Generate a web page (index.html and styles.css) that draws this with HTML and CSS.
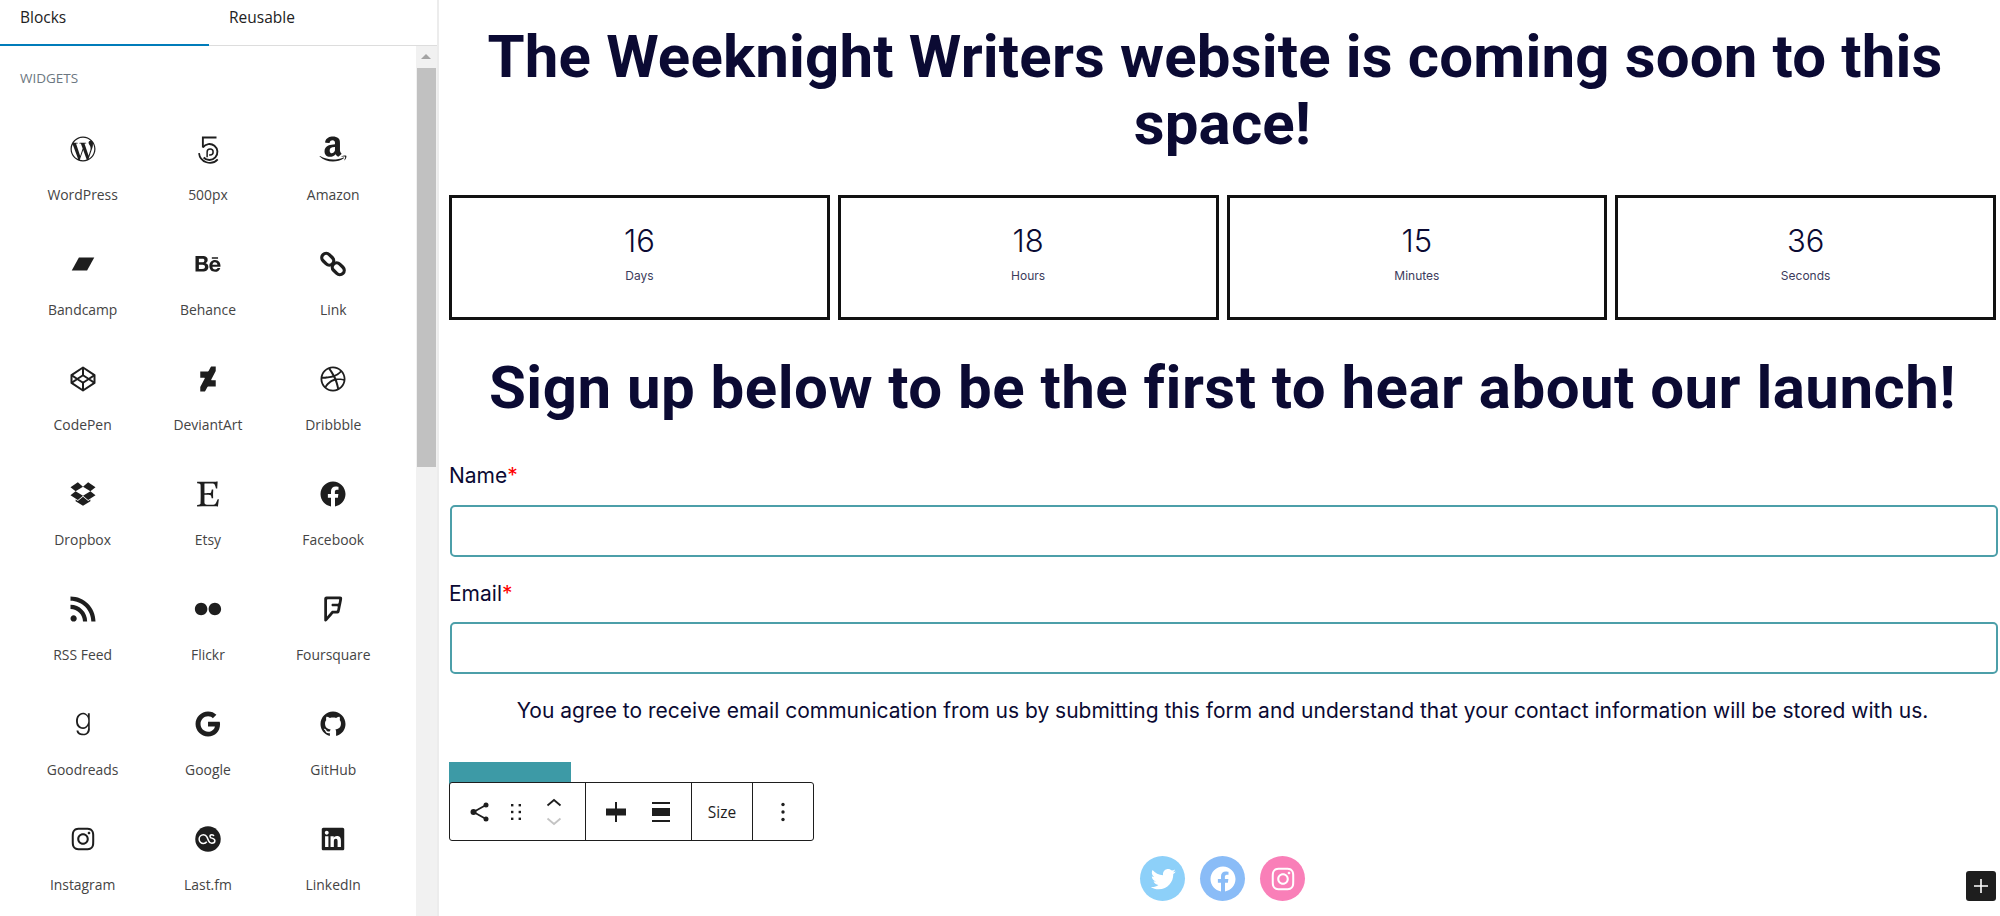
FILE: index.html
```html
<!DOCTYPE html>
<html lang="en">
<head>
  <meta charset="UTF-8" />
  <title>Weeknight Writers</title>
  <link rel="stylesheet" href="styles.css">
</head>
<body>

<aside class="sidebar">
  <div class="tabs">
    <div class="tab active">Blocks</div>
    <div class="tab">Reusable</div>
  </div>
  <div class="panel">
    <div class="block-list">
      <div class="category">WIDGETS</div>
      <div class="block-grid">
        <div class="block-item">
          <svg viewBox="0 0 24 24"><path d="M12.158,12.786L9.46,20.625c0.806,0.237,1.657,0.366,2.54,0.366c1.047,0,2.051-0.181,2.986-0.51 c-0.024-0.038-0.046-0.079-0.065-0.124L12.158,12.786z M3.009,12c0,3.559,2.068,6.634,5.067,8.092L3.788,8.341 C3.289,9.459,3.009,10.696,3.009,12z M18.069,11.546c0-1.112-0.399-1.881-0.741-2.48c-0.456-0.741-0.883-1.368-0.883-2.109 c0-0.826,0.627-1.596,1.51-1.596c0.04,0,0.078,0.005,0.116,0.007C16.472,3.904,14.34,3.009,12,3.009 c-3.141,0-5.904,1.612-7.512,4.052c0.211,0.007,0.41,0.011,0.579,0.011c0.94,0,2.396-0.114,2.396-0.114 C7.947,6.93,8.004,7.642,7.52,7.699c0,0-0.487,0.057-1.029,0.085l3.274,9.739l1.968-5.901l-1.401-3.838 C9.848,7.756,9.389,7.699,9.389,7.699C8.904,7.67,8.961,6.93,9.446,6.958c0,0,1.484,0.114,2.368,0.114 c0.94,0,2.397-0.114,2.397-0.114c0.485-0.028,0.542,0.684,0.057,0.741c0,0-0.488,0.057-1.029,0.085l3.249,9.665l0.897-2.996 C17.841,13.284,18.069,12.316,18.069,11.546z M19.889,7.686c0.039,0.286,0.06,0.593,0.06,0.924c0,0.912-0.171,1.938-0.684,3.22 l-2.746,7.94c2.673-1.558,4.47-4.454,4.47-7.771C20.991,10.436,20.591,8.967,19.889,7.686z M12,22C6.486,22,2,17.514,2,12 C2,6.486,6.486,2,12,2c5.514,0,10,4.486,10,10C22,17.514,17.514,22,12,22z"/></svg>
          <span>WordPress</span>
        </div>
        <div class="block-item">
          <svg viewBox="0 0 24 24"><g fill="none" stroke="currentColor"><path stroke-width="1.500" d="M18.800 2.800H7.900v7.900"/><path stroke-width="1.500" d="M7.900 10.700A6.400 6.400 0 1 1 8.500 18.800"/><path stroke-width="1.200" d="M11.300 18.500V14.300a2.400 2.400 0 1 1 2.400 2.400h-.8"/><path stroke-width="1.400" d="M4.800 15.300A8.700 8.700 0 0 0 19.800 20.300"/></g></svg>
          <span>500px</span>
        </div>
        <div class="block-item">
          <svg viewBox="0 0 24 24"><path d="M13.582,8.182C11.934,8.367,9.78,8.49,8.238,9.166c-1.781,0.769-3.03,2.337-3.03,4.644 c0,2.953,1.86,4.429,4.253,4.429c2.02,0,3.125-0.477,4.685-2.065c0.516,0.747,0.685,1.109,1.629,1.894 c0.212,0.114,0.483,0.103,0.672-0.066l0.006,0.006c0.567-0.505,1.599-1.401,2.18-1.888c0.231-0.188,0.19-0.496,0.009-0.754 c-0.52-0.718-1.072-1.303-1.072-2.634V8.305c0-1.876,0.133-3.599-1.249-4.891C15.23,2.369,13.422,2,12.04,2 C9.336,2,6.318,3.01,5.686,6.351C5.618,6.706,5.877,6.893,6.109,6.945l2.754,0.298C9.121,7.23,9.308,6.977,9.357,6.72 c0.236-1.151,1.2-1.706,2.284-1.706c0.584,0,1.249,0.215,1.595,0.738c0.398,0.584,0.346,1.384,0.346,2.061V8.182z M13.049,14.088 c-0.451,0.8-1.169,1.291-1.967,1.291c-1.09,0-1.728-0.83-1.728-2.061c0-2.42,2.171-2.86,4.227-2.86v0.615 C13.582,13.18,13.608,14.112,13.049,14.088z M20.683,19.339C18.329,21.076,14.917,22,11.979,22c-4.118,0-7.826-1.522-10.632-4.057 c-0.22-0.199-0.024-0.471,0.241-0.317c3.027,1.762,6.771,2.823,10.639,2.823c2.608,0,5.476-0.541,8.115-1.66 C20.739,18.62,21.072,19.051,20.683,19.339z M21.336,21.043c-0.194,0.163-0.379,0.076-0.293-0.139 c0.284-0.71,0.92-2.298,0.619-2.684c-0.301-0.386-1.99-0.183-2.749-0.092c-0.23,0.027-0.266-0.173-0.059-0.319 c1.348-0.946,3.555-0.673,3.811-0.356C22.925,17.773,22.599,19.986,21.336,21.043z"/></svg>
          <span>Amazon</span>
        </div>
        <div class="block-item">
          <svg viewBox="0 0 24 24"><path d="M15.27 17.289 3 17.289 8.73 6.711 21 6.711 15.27 17.289"/></svg>
          <span>Bandcamp</span>
        </div>
        <div class="block-item">
          <svg viewBox="0 0 24 24"><path d="M7.799,5.698c0.589,0,1.12,0.051,1.606,0.156c0.482,0.102,0.894,0.273,1.241,0.507c0.344,0.235,0.612,0.546,0.804,0.938 c0.188,0.387,0.281,0.871,0.281,1.443c0,0.619-0.141,1.137-0.421,1.551c-0.284,0.413-0.7,0.751-1.255,1.014 c0.756,0.218,1.317,0.601,1.689,1.146c0.374,0.549,0.557,1.205,0.557,1.975c0,0.623-0.12,1.161-0.359,1.612 c-0.241,0.457-0.569,0.828-0.973,1.114c-0.408,0.288-0.876,0.5-1.399,0.637C9.052,17.931,8.514,18,7.963,18H2V5.698H7.799 M7.449,10.668c0.481,0,0.878-0.114,1.192-0.345c0.311-0.228,0.463-0.603,0.463-1.119c0-0.286-0.051-0.523-0.152-0.707 C8.848,8.315,8.711,8.171,8.536,8.07C8.362,7.966,8.166,7.894,7.94,7.854c-0.224-0.044-0.457-0.06-0.697-0.06H4.709v2.874H7.449z M7.6,15.905c0.267,0,0.521-0.024,0.759-0.077c0.243-0.053,0.457-0.137,0.637-0.261c0.182-0.12,0.332-0.283,0.441-0.491 C9.547,14.87,9.6,14.602,9.6,14.278c0-0.633-0.18-1.084-0.533-1.357c-0.356-0.27-0.83-0.404-1.413-0.404H4.709v3.388L7.6,15.905z M16.162,15.864c0.367,0.358,0.897,0.538,1.583,0.538c0.493,0,0.92-0.125,1.277-0.374c0.354-0.248,0.571-0.514,0.654-0.79h2.155 c-0.347,1.072-0.872,1.838-1.589,2.299C19.534,18,18.67,18.23,17.662,18.23c-0.701,0-1.332-0.113-1.899-0.337 c-0.567-0.227-1.041-0.544-1.439-0.958c-0.389-0.415-0.689-0.907-0.904-1.484c-0.213-0.574-0.32-1.21-0.32-1.899 c0-0.666,0.11-1.288,0.329-1.863c0.222-0.577,0.529-1.075,0.933-1.492c0.406-0.42,0.885-0.751,1.444-0.994 c0.558-0.241,1.175-0.363,1.857-0.363c0.754,0,1.414,0.145,1.98,0.44c0.563,0.291,1.026,0.686,1.389,1.181 c0.363,0.493,0.622,1.057,0.783,1.69c0.16,0.632,0.217,1.292,0.171,1.983h-6.428C15.557,14.84,15.795,15.506,16.162,15.864 M18.973,11.184c-0.291-0.321-0.783-0.496-1.384-0.496c-0.39,0-0.714,0.066-0.973,0.2c-0.254,0.132-0.461,0.297-0.621,0.491 c-0.157,0.197-0.265,0.405-0.328,0.628c-0.063,0.217-0.101,0.413-0.111,0.587h3.98C19.478,11.969,19.265,11.509,18.973,11.184z M15.057,7.738h4.985V6.524h-4.985L15.057,7.738z"/></svg>
          <span>Behance</span>
        </div>
        <div class="block-item">
          <svg viewBox="0 0 24 24"><g fill="none" stroke="currentColor" stroke-width="2.600"><rect x="2.500" y="4.700" width="10.600" height="7" rx="3.500" transform="rotate(45 7.800 8.200)"/><rect x="10.900" y="12.300" width="10.600" height="7" rx="3.500" transform="rotate(45 16.200 15.800)"/></g></svg>
          <span>Link</span>
        </div>
        <div class="block-item">
          <svg viewBox="0 0 24 24"><g fill="none" stroke="currentColor" stroke-width="1.600" stroke-linejoin="round"><path d="M12 2.800 21.200 8.900v6.200L12 21.200 2.800 15.100V8.900z"/><path d="M12 9 16.600 12 12 15 7.400 12z"/><path d="M12 2.800V9M12 15v6.200M2.800 8.900 7.400 12 2.800 15.100M21.200 8.900 16.600 12l4.600 3.100"/></g></svg>
          <span>CodePen</span>
        </div>
        <div class="block-item">
          <svg viewBox="0 0 24 24"><path d="M 18.19 5.636 18.19 2 18.188 2 14.553 2 14.19 2.366 12.474 5.636 11.935 6 5.81 6 5.81 10.994 9.177 10.994 9.477 11.357 5.81 18.363 5.81 22 5.811 22 9.447 22 9.81 21.634 11.526 18.364 12.065 18 18.19 18 18.19 13.006 14.823 13.006 14.523 12.641 z"/></svg>
          <span>DeviantArt</span>
        </div>
        <div class="block-item">
          <svg viewBox="0 0 24 24"><path d="M12,22C6.486,22,2,17.514,2,12S6.486,2,12,2c5.514,0,10,4.486,10,10S17.514,22,12,22z M20.434,13.369 c-0.292-0.092-2.644-0.794-5.32-0.365c1.117,3.07,1.572,5.57,1.659,6.09C18.689,17.798,20.053,15.745,20.434,13.369z M15.336,19.876c-0.127-0.749-0.623-3.361-1.822-6.477c-0.019,0.006-0.038,0.013-0.056,0.019c-4.818,1.679-6.547,5.02-6.701,5.334 c1.448,1.129,3.268,1.803,5.243,1.803C13.183,20.555,14.311,20.313,15.336,19.876z M5.654,17.724 c0.193-0.331,2.538-4.213,6.943-5.637c0.111-0.036,0.224-0.07,0.337-0.102c-0.214-0.485-0.448-0.971-0.692-1.45 c-4.266,1.277-8.405,1.223-8.778,1.216c-0.003,0.087-0.004,0.174-0.004,0.261C3.458,14.207,4.29,16.21,5.654,17.724z M3.639,10.264 c0.382,0.005,3.901,0.02,7.897-1.041c-1.415-2.516-2.942-4.631-3.167-4.94C5.979,5.41,4.193,7.613,3.639,10.264z M9.998,3.709 c0.236,0.316,1.787,2.429,3.187,5c3.037-1.138,4.323-2.867,4.477-3.085C16.154,4.286,14.17,3.471,12,3.471 C11.311,3.471,10.641,3.554,9.998,3.709z M18.612,6.612C18.432,6.855,17,8.69,13.842,9.979c0.199,0.407,0.389,0.821,0.567,1.237 c0.063,0.148,0.124,0.295,0.184,0.441c2.842-0.357,5.666,0.215,5.948,0.275C20.522,9.916,19.801,8.065,18.612,6.612z"/></svg>
          <span>Dribbble</span>
        </div>
        <div class="block-item">
          <svg viewBox="0 0 24 24"><path d="M12,6.134L6.069,9.797L2,6.54l5.883-3.843L12,6.134z M2,13.054l5.883,3.843L12,13.459L6.069,9.797L2,13.054z M12,13.459 l4.116,3.439L22,13.054l-4.069-3.257L12,13.459z M22,6.54l-5.884-3.843L12,6.134l5.931,3.663L22,6.54z M12.011,14.2l-4.129,3.426 l-1.767-1.153v1.291l5.896,3.539l5.897-3.539v-1.291l-1.769,1.153L12.011,14.2z"/></svg>
          <span>Dropbox</span>
        </div>
        <div class="block-item">
          <svg viewBox="0 0 24 24"><path d="M9.16033,4.038c0-.27174.02717-.43478.48913-.43478h6.22283c1.087,0,1.68478.92391,2.11957,2.663l.35326,1.38587h1.05978C19.59511,3.712,19.75815,2,19.75815,2s-2.663.29891-4.23913.29891h-7.962L3.29076,2.163v1.1413L4.731,3.57609c1.00543.19022,1.25.40761,1.33152,1.33152,0,0,.08152,2.71739.08152,7.20109s-.08152,7.17391-.08152,7.17391c0,.81522-.32609,1.11413-1.33152,1.30435l-1.44022.27174V22l4.2663-.13587h7.11957c1.60326,0,5.32609.13587,5.32609.13587.08152-.97826.625-5.40761.70652-5.89674H19.7038L18.644,18.52174c-.84239,1.90217-2.06522,2.038-3.42391,2.038H11.1712c-1.3587,0-2.01087-.54348-2.01087-1.712V12.65217s3.0163,0,3.99457.08152c.76087.05435,1.22283.27174,1.46739,1.33152l.32609,1.413h1.16848l-.08152-3.55978.163-3.587H15.02989l-.38043,1.57609c-.24457,1.03261-.40761,1.22283-1.46739,1.33152-1.38587.13587-4.02174.1087-4.02174.1087Z"/></svg>
          <span>Etsy</span>
        </div>
        <div class="block-item">
          <svg viewBox="0 0 24 24"><path d="M12 2C6.5 2 2 6.5 2 12c0 5 3.7 9.1 8.4 9.9v-7H7.9V12h2.5V9.8c0-2.5 1.5-3.9 3.8-3.9 1.1 0 2.2.2 2.2.2v2.5h-1.3c-1.2 0-1.6.8-1.6 1.6V12h2.8l-.4 2.9h-2.3v7C18.3 21.1 22 17 22 12c0-5.5-4.5-10-10-10z"/></svg>
          <span>Facebook</span>
        </div>
        <div class="block-item">
          <svg viewBox="0 0 24 24"><path d="M2,8.667V12c5.515,0,10,4.485,10,10h3.333C15.333,14.637,9.363,8.667,2,8.667z M2,2v3.333 c9.19,0,16.667,7.477,16.667,16.667H22C22,10.955,13.045,2,2,2z M4.5,17C3.118,17,2,18.12,2,19.5S3.118,22,4.5,22S7,20.88,7,19.5 S5.882,17,4.5,17z"/></svg>
          <span>RSS Feed</span>
        </div>
        <div class="block-item">
          <svg viewBox="0 0 24 24"><path d="M6.5,7c-2.75,0-5,2.25-5,5s2.25,5,5,5s5-2.25,5-5S9.25,7,6.5,7z M17.5,7c-2.75,0-5,2.25-5,5s2.25,5,5,5s5-2.25,5-5 S20.25,7,17.5,7z"/></svg>
          <span>Flickr</span>
        </div>
        <div class="block-item">
          <svg viewBox="0 0 24 24"><path d="M17.573,2c0,0-9.197,0-10.668,0S5,3.107,5,3.805s0,16.948,0,16.948c0,0.785,0.422,1.077,0.66,1.172 c0.238,0.097,0.892,0.177,1.285-0.275c0,0,5.035-5.843,5.122-5.93c0.132-0.132,0.132-0.132,0.262-0.132h3.26 c1.368,0,1.588-0.977,1.732-1.552c0.078-0.318,0.692-3.428,1.225-6.122l0.675-3.368C19.56,2.893,19.14,2,17.573,2z M16.495,7.22 c-0.053,0.252-0.372,0.518-0.665,0.518c-0.293,0-4.157,0-4.157,0c-0.467,0-0.802,0.318-0.802,0.787v0.508 c0,0.467,0.337,0.798,0.805,0.798c0,0,3.197,0,3.528,0s0.655,0.362,0.583,0.715c-0.072,0.353-0.407,2.102-0.448,2.295 c-0.04,0.193-0.262,0.523-0.655,0.523c-0.33,0-2.88,0-2.88,0c-0.523,0-0.683,0.068-1.033,0.503 c-0.35,0.437-3.505,4.223-3.505,4.223c-0.032,0.035-0.063,0.027-0.063-0.015V4.852c0-0.3,0.26-0.652,0.648-0.652 c0,0,8.228,0,8.562,0c0.315,0,0.61,0.297,0.528,0.683L16.495,7.22z"/></svg>
          <span>Foursquare</span>
        </div>
        <div class="block-item">
          <svg viewBox="0 0 24 24"><path d="M17.3,17.5c-0.2,0.8-0.5,1.4-1,1.9c-0.4,0.5-1,0.9-1.7,1.2C13.9,20.9,13.1,21,12,21c-0.6,0-1.3-0.1-1.9-0.2 c-0.6-0.1-1.1-0.4-1.6-0.7c-0.5-0.3-0.9-0.7-1.2-1.2c-0.3-0.5-0.5-1.1-0.5-1.7h1.5c0.1,0.5,0.2,0.9,0.5,1.2 c0.2,0.3,0.5,0.6,0.9,0.8c0.3,0.2,0.7,0.3,1.1,0.4c0.4,0.1,0.8,0.1,1.2,0.1c1.4,0,2.5-0.4,3.1-1.2c0.6-0.8,1-2,1-3.5v-1.7h0 c-0.4,0.8-0.9,1.4-1.6,1.9c-0.7,0.5-1.5,0.7-2.4,0.7c-1,0-1.9-0.2-2.6-0.5C8.7,15,8.1,14.5,7.7,14c-0.5-0.6-0.8-1.3-1-2.1 c-0.2-0.8-0.3-1.6-0.3-2.5c0-0.9,0.1-1.7,0.4-2.5c0.3-0.8,0.6-1.5,1.1-2c0.5-0.6,1.1-1,1.8-1.4C10.3,3.2,11.1,3,12,3 c0.5,0,0.9,0.1,1.3,0.2c0.4,0.1,0.8,0.3,1.1,0.5c0.3,0.2,0.6,0.5,0.9,0.8c0.3,0.3,0.5,0.6,0.6,1h0V3.4h1.5V15 C17.6,15.9,17.5,16.7,17.3,17.5z M13.8,14.1c0.5-0.3,0.9-0.7,1.3-1.1c0.3-0.5,0.6-1,0.8-1.6c0.2-0.6,0.3-1.2,0.3-1.9 c0-0.6-0.1-1.2-0.2-1.9c-0.1-0.6-0.4-1.2-0.7-1.7c-0.3-0.5-0.7-0.9-1.3-1.2c-0.5-0.3-1.1-0.5-1.9-0.5s-1.4,0.2-1.9,0.5 c-0.5,0.3-1,0.7-1.3,1.2C8.5,6.4,8.3,7,8.1,7.6C8,8.2,7.9,8.9,7.9,9.5c0,0.6,0.1,1.3,0.2,1.9C8.3,12,8.6,12.5,8.9,13 c0.3,0.5,0.8,0.8,1.3,1.1c0.5,0.3,1.1,0.4,1.9,0.4C12.7,14.5,13.3,14.4,13.8,14.1z"/></svg>
          <span>Goodreads</span>
        </div>
        <div class="block-item">
          <svg viewBox="0 0 24 24"><path d="M12.02,10.18v3.72v0.01h5.51c-0.26,1.57-1.67,4.22-5.5,4.22c-3.31,0-6.01-2.75-6.01-6.12s2.7-6.12,6.01-6.12 c1.87,0,3.13,0.8,3.85,1.48l2.84-2.76C16.99,2.99,14.73,2,12.03,2c-5.52,0-10,4.48-10,10s4.48,10,10,10c5.77,0,9.6-4.06,9.6-9.77 c0-0.83-0.11-1.42-0.25-2.05H12.02z"/></svg>
          <span>Google</span>
        </div>
        <div class="block-item">
          <svg viewBox="0 0 24 24"><path d="M12,2C6.477,2,2,6.477,2,12c0,4.419,2.865,8.166,6.839,9.489c0.5,0.09,0.682-0.218,0.682-0.484 c0-0.236-0.009-0.866-0.014-1.699c-2.782,0.602-3.369-1.34-3.369-1.34c-0.455-1.157-1.11-1.465-1.11-1.465 c-0.909-0.62,0.069-0.608,0.069-0.608c1.004,0.071,1.532,1.03,1.532,1.03c0.891,1.529,2.341,1.089,2.91,0.833 c0.091-0.647,0.349-1.086,0.635-1.337c-2.22-0.251-4.555-1.111-4.555-4.943c0-1.091,0.39-1.984,1.03-2.682 C6.546,8.54,6.202,7.524,6.746,6.148c0,0,0.84-0.269,2.75,1.025C10.295,6.95,11.15,6.84,12,6.836 c0.85,0.004,1.705,0.114,2.504,0.336c1.909-1.294,2.748-1.025,2.748-1.025c0.546,1.376,0.202,2.394,0.1,2.646 c0.64,0.699,1.026,1.591,1.026,2.682c0,3.841-2.337,4.687-4.565,4.935c0.359,0.307,0.679,0.917,0.679,1.852 c0,1.335-0.012,2.415-0.012,2.741c0,0.269,0.18,0.579,0.688,0.481C19.138,20.161,22,16.416,22,12C22,6.477,17.523,2,12,2z"/></svg>
          <span>GitHub</span>
        </div>
        <div class="block-item">
          <svg viewBox="0 0 24 24"><path d="M12,4.622c2.403,0,2.688,0.009,3.637,0.052c0.877,0.04,1.354,0.187,1.671,0.31c0.42,0.163,0.72,0.358,1.035,0.673 c0.315,0.315,0.51,0.615,0.673,1.035c0.123,0.317,0.27,0.794,0.31,1.671c0.043,0.949,0.052,1.234,0.052,3.637 s-0.009,2.688-0.052,3.637c-0.04,0.877-0.187,1.354-0.31,1.671c-0.163,0.42-0.358,0.72-0.673,1.035 c-0.315,0.315-0.615,0.51-1.035,0.673c-0.317,0.123-0.794,0.27-1.671,0.31c-0.949,0.043-1.233,0.052-3.637,0.052 s-2.688-0.009-3.637-0.052c-0.877-0.04-1.354-0.187-1.671-0.31c-0.42-0.163-0.72-0.358-1.035-0.673 c-0.315-0.315-0.51-0.615-0.673-1.035c-0.123-0.317-0.27-0.794-0.31-1.671C4.631,14.688,4.622,14.403,4.622,12 s0.009-2.688,0.052-3.637c0.04-0.877,0.187-1.354,0.31-1.671c0.163-0.42,0.358-0.72,0.673-1.035 c0.315-0.315,0.615-0.51,1.035-0.673c0.317-0.123,0.794-0.27,1.671-0.31C9.312,4.631,9.597,4.622,12,4.622 M12,3 C9.556,3,9.249,3.01,8.289,3.054C7.331,3.098,6.677,3.25,6.105,3.472C5.513,3.702,5.011,4.01,4.511,4.511 c-0.5,0.5-0.808,1.002-1.038,1.594C3.25,6.677,3.098,7.331,3.054,8.289C3.01,9.249,3,9.556,3,12c0,2.444,0.01,2.751,0.054,3.711 c0.044,0.958,0.196,1.612,0.418,2.185c0.23,0.592,0.538,1.094,1.038,1.594c0.5,0.5,1.002,0.808,1.594,1.038 c0.572,0.222,1.227,0.375,2.185,0.418C9.249,20.99,9.556,21,12,21s2.751-0.01,3.711-0.054c0.958-0.044,1.612-0.196,2.185-0.418 c0.592-0.23,1.094-0.538,1.594-1.038c0.5-0.5,0.808-1.002,1.038-1.594c0.222-0.572,0.375-1.227,0.418-2.185 C20.99,14.751,21,14.444,21,12s-0.01-2.751-0.054-3.711c-0.044-0.958-0.196-1.612-0.418-2.185c-0.23-0.592-0.538-1.094-1.038-1.594 c-0.5-0.5-1.002-0.808-1.594-1.038c-0.572-0.222-1.227-0.375-2.185-0.418C14.751,3.01,14.444,3,12,3L12,3z M12,7.378 c-2.552,0-4.622,2.069-4.622,4.622S9.448,16.622,12,16.622s4.622-2.069,4.622-4.622S14.552,7.378,12,7.378z M12,15 c-1.657,0-3-1.343-3-3s1.343-3,3-3s3,1.343,3,3S13.657,15,12,15z M16.804,6.116c-0.596,0-1.08,0.484-1.08,1.08 s0.484,1.08,1.08,1.08c0.596,0,1.08-0.484,1.08-1.08S17.401,6.116,16.804,6.116z"/></svg>
          <span>Instagram</span>
        </div>
        <div class="block-item">
          <svg viewBox="0 0 24 24"><circle cx="12" cy="12" r="10.200"/><path fill="none" stroke="#fff" stroke-width="1.200" d="M11 14.200c-.7 1-1.600 1.400-2.600 1.400A3.500 3.500 0 0 1 4.900 12a3.500 3.500 0 0 1 3.500-3.500c1.300 0 2.200.7 2.800 2l1.300 3c.5 1.200 1.100 1.900 2.500 1.900 1.500 0 2.500-.8 2.500-2 0-1.100-.7-1.600-1.900-1.900-1.500-.4-2-.8-2-1.600 0-.8.7-1.300 1.500-1.300s1.400.4 1.600 1.100"/></svg>
          <span>Last.fm</span>
        </div>
        <div class="block-item">
          <svg viewBox="0 0 24 24"><path d="M19.7,3H4.3C3.582,3,3,3.582,3,4.3v15.4C3,20.418,3.582,21,4.3,21h15.4c0.718,0,1.3-0.582,1.3-1.3V4.3 C21,3.582,20.418,3,19.7,3z M8.339,18.338H5.667v-8.59h2.672V18.338z M7.004,8.574c-0.857,0-1.549-0.694-1.549-1.548 c0-0.855,0.691-1.548,1.549-1.548c0.854,0,1.547,0.694,1.547,1.548C8.551,7.881,7.858,8.574,7.004,8.574z M18.339,18.338h-2.669 v-4.177c0-0.996-0.017-2.278-1.387-2.278c-1.389,0-1.601,1.086-1.601,2.206v4.249h-2.667v-8.59h2.559v1.174h0.037 c0.356-0.675,1.227-1.387,2.526-1.387c2.703,0,3.203,1.779,3.203,4.092V18.338z"/></svg>
          <span>LinkedIn</span>
        </div>
      </div>
    </div>
    <div class="scrollbar">
      <div class="scroll-arrow"></div>
      <div class="scroll-thumb"></div>
    </div>
  </div>
</aside>

<main class="canvas">
  <h1 class="title">The Weeknight Writers website is coming soon to this&nbsp; space!</h1>

  <div class="countdown">
    <div class="count-box"><div class="count-num">16</div><div class="count-label">Days</div></div>
    <div class="count-box"><div class="count-num">18</div><div class="count-label">Hours</div></div>
    <div class="count-box"><div class="count-num">15</div><div class="count-label">Minutes</div></div>
    <div class="count-box"><div class="count-num">36</div><div class="count-label">Seconds</div></div>
  </div>

  <h2 class="title signup">Sign up below to be the first to hear about our launch!</h2>

  <form class="signup-form">
    <label class="field-label">Name<span class="req">*</span></label>
    <div class="field-input"></div>
    <label class="field-label">Email<span class="req">*</span></label>
    <div class="field-input"></div>
    <p class="consent">You agree to receive email communication from us by submitting this form and understand that your contact information will be stored with us.</p>
    <div class="submit-btn"></div>
  </form>

  <div class="socials">
    <div class="social tw">
      <svg viewBox="0 0 24 24"><path d="M22.23,5.924c-0.736,0.326-1.527,0.547-2.357,0.646c0.847-0.508,1.498-1.312,1.804-2.27 c-0.793,0.47-1.671,0.812-2.606,0.996C18.324,4.498,17.257,4,16.077,4c-2.266,0-4.103,1.837-4.103,4.103 c0,0.322,0.036,0.635,0.106,0.935C8.67,8.867,5.647,7.234,3.623,4.751C3.27,5.357,3.067,6.062,3.067,6.814 c0,1.424,0.724,2.679,1.825,3.415c-0.673-0.021-1.305-0.206-1.859-0.513c0,0.017,0,0.034,0,0.052c0,1.988,1.414,3.647,3.292,4.023 c-0.344,0.094-0.707,0.144-1.081,0.144c-0.264,0-0.521-0.026-0.772-0.074c0.522,1.63,2.038,2.816,3.833,2.85 c-1.404,1.1-3.174,1.756-5.096,1.756c-0.331,0-0.658-0.019-0.979-0.057c1.816,1.164,3.973,1.843,6.29,1.843 c7.547,0,11.675-6.252,11.675-11.675c0-0.178-0.004-0.355-0.012-0.531C20.985,7.47,21.68,6.747,22.23,5.924z"/></svg>
    </div>
    <div class="social fb">
      <svg viewBox="0 0 24 24"><path d="M12 2C6.500 2 2 6.500 2 12c0 5 3.700 9.100 8.400 9.900v-7H7.900V12h2.500V9.800c0-2.500 1.500-3.900 3.800-3.900 1.100 0 2.200.2 2.200.2v2.500h-1.300c-1.200 0-1.600.8-1.600 1.600V12h2.800l-.4 2.900h-2.300v7C18.300 21.100 22 17 22 12c0-5.500-4.500-10-10-10z"/></svg>
    </div>
    <div class="social ig">
      <svg viewBox="0 0 24 24"><path d="M12,4.622c2.403,0,2.688,0.009,3.637,0.052c0.877,0.04,1.354,0.187,1.671,0.31c0.42,0.163,0.72,0.358,1.035,0.673 c0.315,0.315,0.51,0.615,0.673,1.035c0.123,0.317,0.27,0.794,0.31,1.671c0.043,0.949,0.052,1.234,0.052,3.637 s-0.009,2.688-0.052,3.637c-0.04,0.877-0.187,1.354-0.31,1.671c-0.163,0.42-0.358,0.72-0.673,1.035 c-0.315,0.315-0.615,0.51-1.035,0.673c-0.317,0.123-0.794,0.27-1.671,0.31c-0.949,0.043-1.233,0.052-3.637,0.052 s-2.688-0.009-3.637-0.052c-0.877-0.04-1.354-0.187-1.671-0.31c-0.42-0.163-0.72-0.358-1.035-0.673 c-0.315-0.315-0.51-0.615-0.673-1.035c-0.123-0.317-0.27-0.794-0.31-1.671C4.631,14.688,4.622,14.403,4.622,12 s0.009-2.688,0.052-3.637c0.04-0.877,0.187-1.354,0.31-1.671c0.163-0.42,0.358-0.72,0.673-1.035 c0.315-0.315,0.615-0.51,1.035-0.673c0.317-0.123,0.794-0.27,1.671-0.31C9.312,4.631,9.597,4.622,12,4.622 M12,3 C9.556,3,9.249,3.01,8.289,3.054C7.331,3.098,6.677,3.25,6.105,3.472C5.513,3.702,5.011,4.01,4.511,4.511 c-0.5,0.5-0.808,1.002-1.038,1.594C3.25,6.677,3.098,7.331,3.054,8.289C3.01,9.249,3,9.556,3,12c0,2.444,0.01,2.751,0.054,3.711 c0.044,0.958,0.196,1.612,0.418,2.185c0.23,0.592,0.538,1.094,1.038,1.594c0.5,0.5,1.002,0.808,1.594,1.038 c0.572,0.222,1.227,0.375,2.185,0.418C9.249,20.99,9.556,21,12,21s2.751-0.01,3.711-0.054c0.958-0.044,1.612-0.196,2.185-0.418 c0.592-0.23,1.094-0.538,1.594-1.038c0.5-0.5,0.808-1.002,1.038-1.594c0.222-0.572,0.375-1.227,0.418-2.185 C20.99,14.751,21,14.444,21,12s-0.01-2.751-0.054-3.711c-0.044-0.958-0.196-1.612-0.418-2.185c-0.23-0.592-0.538-1.094-1.038-1.594 c-0.5-0.5-1.002-0.808-1.594-1.038c-0.572-0.222-1.227-0.375-2.185-0.418C14.751,3.01,14.444,3,12,3L12,3z M12,7.378 c-2.552,0-4.622,2.069-4.622,4.622S9.448,16.622,12,16.622s4.622-2.069,4.622-4.622S14.552,7.378,12,7.378z M12,15 c-1.657,0-3-1.343-3-3s1.343-3,3-3s3,1.343,3,3S13.657,15,12,15z M16.804,6.116c-0.596,0-1.08,0.484-1.08,1.08 s0.484,1.08,1.08,1.08c0.596,0,1.08-0.484,1.08-1.08S17.401,6.116,16.804,6.116z"/></svg>
    </div>
  </div>

  <!-- floating block toolbar -->
  <div class="toolbar">
    <div class="tool-group first">
      <svg class="tool-share" viewBox="0 0 20 20"><path fill="none" stroke="currentColor" stroke-width="1.800" d="M16 3 3.500 10 16 17"/><circle cx="16" cy="3" r="2.500"/><circle cx="3.500" cy="10" r="3"/><circle cx="16" cy="17" r="2.500"/></svg>
      <svg class="tool-drag" viewBox="0 0 12 18"><rect x="1" y="1" width="2.400" height="2.400"/><rect x="8.600" y="1" width="2.400" height="2.400"/><rect x="1" y="7.800" width="2.400" height="2.400"/><rect x="8.600" y="7.800" width="2.400" height="2.400"/><rect x="1" y="14.600" width="2.400" height="2.400"/><rect x="8.600" y="14.600" width="2.400" height="2.400"/></svg>
      <div class="movers">
        <svg viewBox="0 0 16 9"><path fill="none" stroke="currentColor" stroke-width="1.800" d="M1.500 7.500 8 2l6.500 5.500"/></svg>
        <svg class="off" viewBox="0 0 16 9"><path fill="none" stroke="currentColor" stroke-width="1.800" d="M1.500 1.500 8 7l6.500-5.500"/></svg>
      </div>
    </div>
    <div class="tool-group second">
      <svg class="tool-just" viewBox="0 0 22 22"><rect x="1" y="7.500" width="20" height="7"/><rect x="10" y="1" width="2" height="20"/></svg>
      <svg class="tool-just" viewBox="0 0 22 22"><rect x="2" y="1" width="18" height="2"/><rect x="2" y="7" width="18" height="8"/><rect x="2" y="19" width="18" height="2"/></svg>
    </div>
    <div class="tool-group size">Size</div>
    <div class="tool-group more">
      <svg viewBox="0 0 4 20"><circle cx="2" cy="2.500" r="1.700"/><circle cx="2" cy="10" r="1.700"/><circle cx="2" cy="17.500" r="1.700"/></svg>
    </div>
  </div>

  <div class="add-block">
    <svg viewBox="0 0 16 16"><path fill="none" stroke="#fff" stroke-width="1.600" d="M8 1v14M1 8h14"/></svg>
  </div>
</main>

</body>
</html>
```

FILE: styles.css
```css
html, body {
  margin: 0;
  padding: 0;
  height: 916px;
  overflow: hidden;
  background: #fff;
}

body {
  display: flex;
  font-family: 'Open Sans', sans-serif;
  color: #1e1e1e;
}

/* left inserter */
.sidebar {
  width: 437px;
  height: 916px;
  flex: none;
  display: flex;
  flex-direction: column;
  border-right: 2px solid #ececec;
}

.tabs {
  display: flex;
  height: 45px;
  flex: none;
  border-bottom: 1px solid #ddd;
}

.tab {
  width: 209px;
  padding-left: 20px;
  box-sizing: border-box;
  font-size: 15.500px;
  line-height: 35px;
  color: #222;
}

.tab.active {
  border-bottom: 2px solid #007cba;
  height: 46px;
}

.panel {
  flex: 1;
  display: flex;
  min-height: 0;
}

.block-list {
  flex: 1;
  overflow: hidden;
}

.category {
  margin: 23px 0 0 20px;
  font-size: 13.500px;
  line-height: 18px;
  color: #6c7781;
}

.block-grid {
  display: grid;
  grid-template-columns: repeat(3, 125.300px);
  grid-auto-rows: 115px;
  padding: 47px 0 0 20px;
}

.block-item {
  display: flex;
  flex-direction: column;
  align-items: center;
  color: #1e1e1e;
  font-size: 13.900px;
}

.block-item svg {
  width: 30px;
  height: 30px;
  fill: currentColor;
}

.block-item span {
  margin-top: 20px;
  line-height: 21px;
  color: #444;
}

.scrollbar {
  width: 21px;
  flex: none;
  background: #f1f1f1;
  display: flex;
  flex-direction: column;
  padding-top: 8px;
  box-sizing: border-box;
}

.scroll-arrow {
  width: 0;
  height: 0;
  margin: 0 0 9px 5px;
  border: 5px solid transparent;
  border-top: 0;
  border-bottom: 5px solid #a3a3a3;
}

.scroll-thumb {
  width: 19px;
  height: 399px;
  margin-left: 1px;
  background: #c1c1c1;
}

/* main editor canvas */
.canvas {
  flex: 1;
  min-width: 0;
  position: relative;
  padding: 23px 4px 0 10px;
  color: #0b0a33;
}

.title {
  margin: 0;
  font-family: Roboto, sans-serif;
  font-weight: 700;
  font-size: 60px;
  line-height: 67px;
  text-align: center;
  letter-spacing: 0.150px;
}

.countdown {
  display: flex;
  gap: 8px;
  margin-top: 38px;
}

.count-box {
  flex: 1;
  height: 125px;
  box-sizing: border-box;
  border: 3px solid #111;
  text-align: center;
  padding-top: 24px;
}

.count-num {
  font-family: Inter, sans-serif;
  font-weight: 300;
  font-size: 31px;
  line-height: 38px;
}

.count-label {
  margin-top: 8px;
  font-family: Inter, sans-serif;
  font-size: 12px;
  line-height: 16px;
  color: #3c3b5c;
}

.signup {
  margin-top: 34px;
  letter-spacing: 0.470px;
}

.signup-form {
  margin-top: 43px;
  display: flex;
  flex-direction: column;
}

.field-label {
  font-family: Inter, sans-serif;
  font-size: 21px;
  line-height: 24px;
}

.field-label + .field-input + .field-label {
  margin-top: 1px;
}

.req {
  color: #f00;
}

.field-input {
  height: 52px;
  box-sizing: border-box;
  margin: 17px -2px 24px 1px;
  border: 2px solid #4c9fa9;
  border-radius: 5px;
}

.field-label + .field-input + .field-label + .field-input {
  margin-top: 16px;
}

.consent {
  margin: -1px 0 0;
  font-family: Inter, sans-serif;
  font-size: 21px;
  line-height: 28px;
  text-align: center;
}

.submit-btn {
  width: 122px;
  height: 50px;
  margin-top: 37px;
  background: #3d9aa6;
}

.socials {
  position: absolute;
  left: 701px;
  top: 856px;
  display: flex;
  gap: 15px;
}

.social {
  width: 45px;
  height: 45px;
  border-radius: 50%;
  display: flex;
  align-items: center;
  justify-content: center;
}

.social svg {
  width: 30px;
  height: 30px;
  fill: #fff;
}

.social.tw { background: #8dd0f9; }
.social.fb { background: #8abcf7; }
.social.ig { background: #f97fb8; }

.toolbar {
  position: absolute;
  left: 10px;
  top: 782px;
  height: 59px;
  display: flex;
  box-sizing: border-box;
  background: #fff;
  border: 1.500px solid #1e1e1e;
  border-radius: 3px;
  color: #1e1e1e;
}

.tool-group {
  display: flex;
  align-items: center;
  box-sizing: border-box;
  border-left: 1.500px solid #1e1e1e;
  fill: currentColor;
}

.tool-group.first {
  width: 135px;
  border-left: 0;
  padding-left: 20px;
}

.tool-share { width: 20px; height: 20px; }
.tool-drag { width: 12px; height: 18px; margin-left: 20px; }

.movers {
  display: flex;
  flex-direction: column;
  gap: 10px;
  margin-left: 24px;
}

.movers svg {
  display: block;
  width: 16px;
  height: 9px;
}

.movers .off {
  color: #c4c4c4;
}

.tool-group.second {
  width: 106px;
  padding-left: 19px;
  gap: 23px;
}

.tool-just { width: 22px; height: 22px; }

.tool-group.size {
  width: 61px;
  justify-content: center;
  font-family: 'Open Sans', sans-serif;
  font-size: 15.500px;
}

.tool-group.more {
  width: 61px;
  justify-content: center;
}

.tool-group.more svg { width: 4px; height: 20px; }

.add-block {
  position: absolute;
  right: 4px;
  top: 871px;
  width: 30px;
  height: 30px;
  border-radius: 3px;
  background: #1e1e1e;
  display: flex;
  align-items: center;
  justify-content: center;
}

.add-block svg { width: 16px; height: 16px; }
```
